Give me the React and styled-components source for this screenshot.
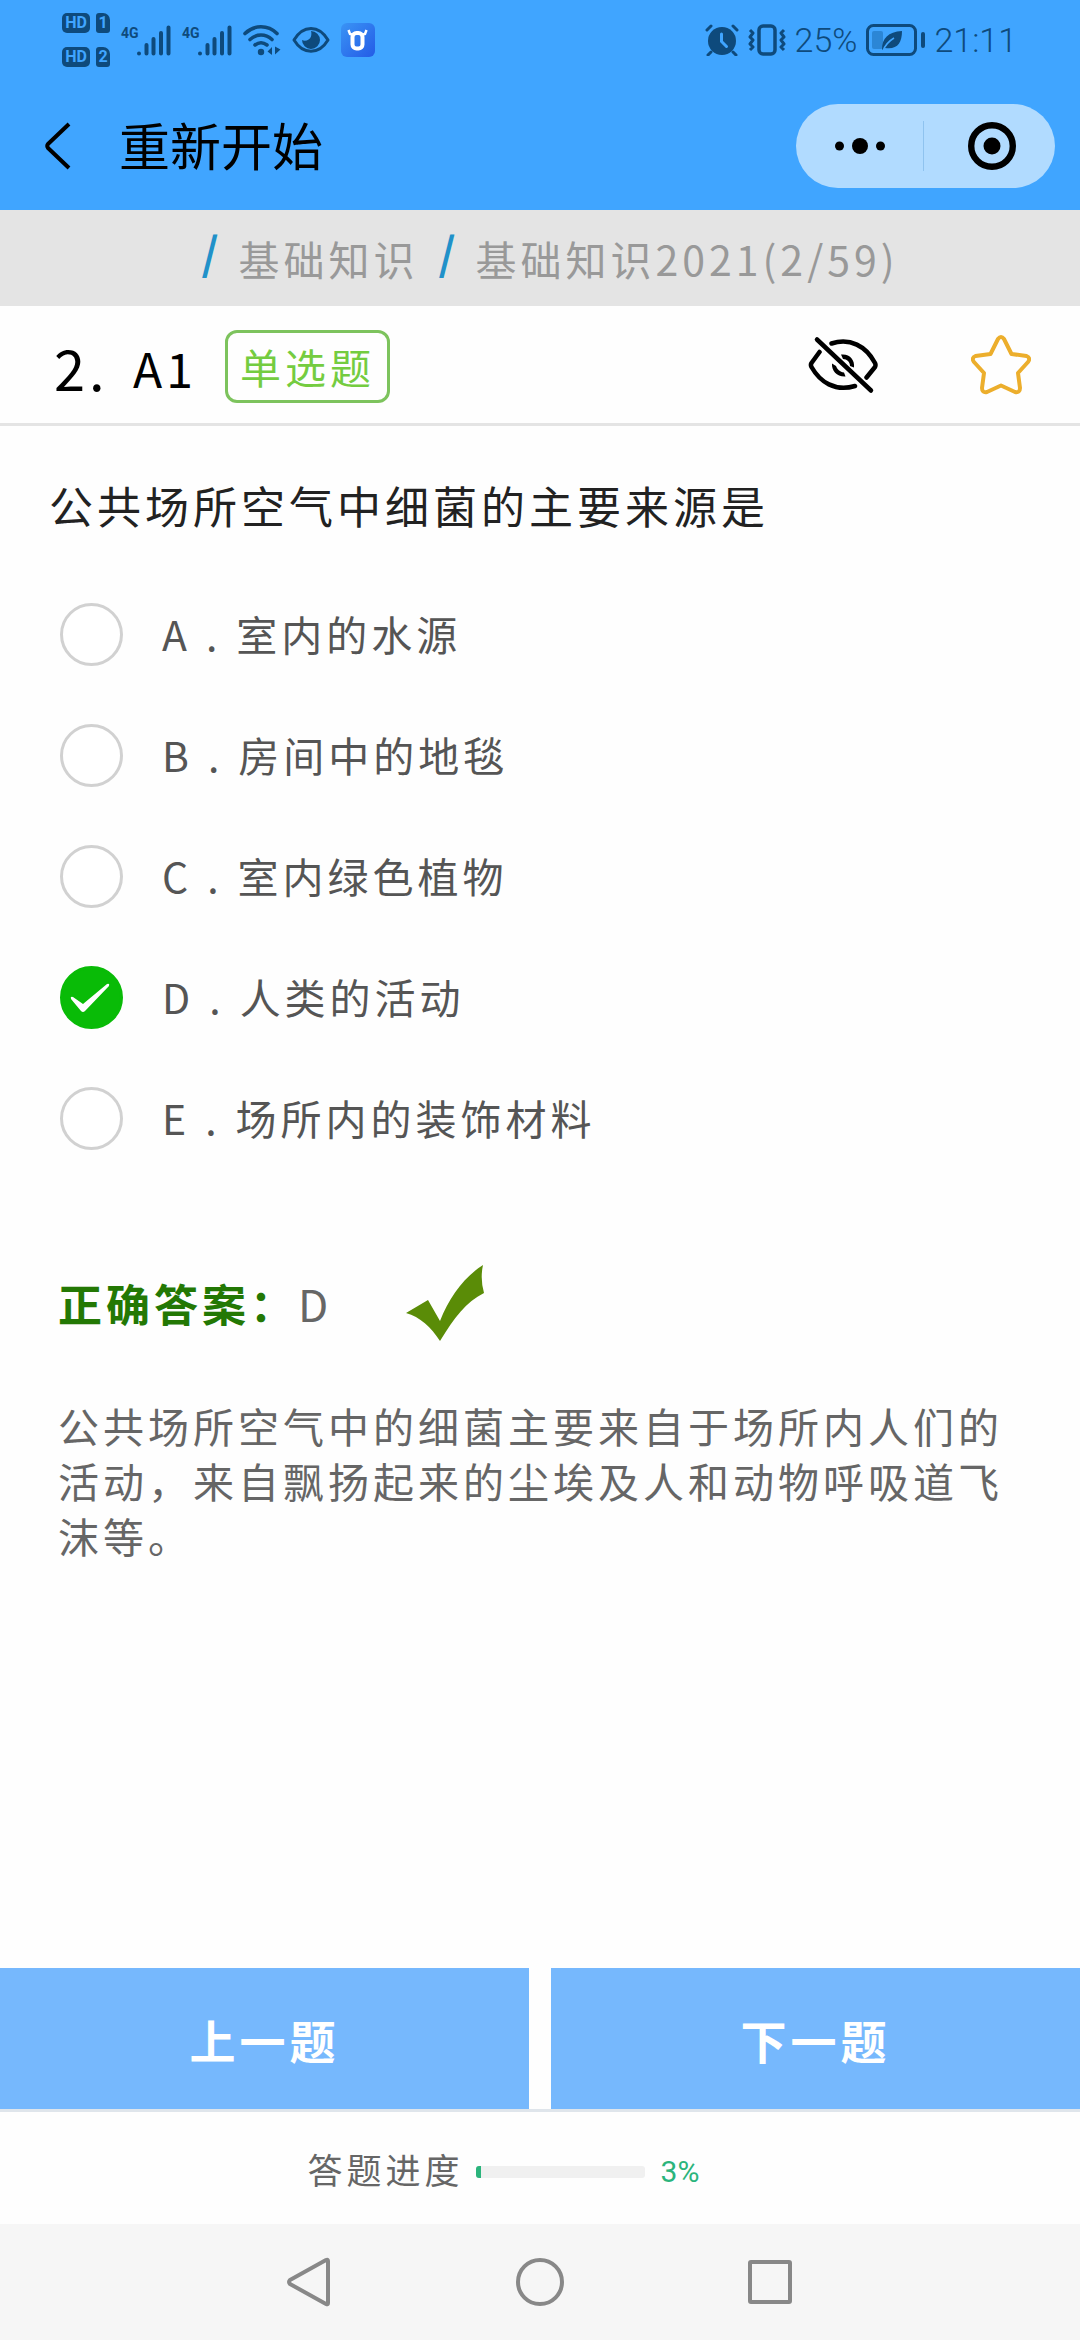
import React, { useState } from 'react';
import styled, { createGlobalStyle } from 'styled-components';

const GlobalStyle = createGlobalStyle`
  * {
    box-sizing: border-box;
  }

  body {
    margin: 0;
    background-color: #fefefe;
    font-family: 'Noto Sans CJK SC', sans-serif;
  }

  button {
    padding: 0;
    border: none;
    background: none;
    font-family: inherit;
    cursor: pointer;
  }

  svg {
    display: block;
    flex-shrink: 0;
  }
`;

const Page = styled.div`
  display: flex;
  flex-direction: column;
  min-height: 100vh;
  width: 100%;
`;

const StatusBar = styled.div`
  display: flex;
  align-items: center;
  justify-content: space-between;
  height: 80px;
  padding: 0 63px 0 62px;
  background-color: #40a5ff;
  color: #0e4a7c;
  font-family: Roboto, 'Noto Sans CJK SC', sans-serif;
`;

const StatusGroup = styled.div`
  display: flex;
  align-items: center;
  gap: ${({ $gap }) => $gap}px;
`;

const SimList = styled.div`
  display: flex;
  flex-direction: column;
  gap: 14px;
`;

const Sim = styled.div`
  display: flex;
  gap: 6px;
`;

const SimTag = styled.span`
  width: ${({ $narrow }) => ($narrow ? 14 : 28)}px;
  height: 20px;
  border-radius: ${({ $narrow }) => ($narrow ? '3px 7px 3px 3px' : '5px')};
  background-color: #0e4a7c;
  color: #40a5ff;
  font-size: 16px;
  font-weight: 700;
  line-height: 20px;
  text-align: center;
`;

const Signal = styled.div`
  display: flex;
  align-items: flex-start;
`;

const NetworkType = styled.span`
  width: 16px;
  font-size: 14px;
  font-weight: 700;
  line-height: 16px;
`;

const StatusText = styled.span`
  font-size: 34px;
  font-weight: 300;
  line-height: 40px;
`;

const Header = styled.header`
  display: flex;
  align-items: center;
  justify-content: space-between;
  height: 130px;
  padding: 2px 25px 0 44px;
  background-color: #40a5ff;
`;

const HeaderLeft = styled.div`
  display: flex;
  align-items: center;
  gap: 48px;
`;

const Title = styled.h1`
  margin: 0;
  padding-bottom: 4px;
  font-size: 51px;
  font-weight: 400;
  line-height: 60px;
  color: #000;
`;

const Capsule = styled.div`
  display: flex;
  align-items: center;
  width: 259px;
  height: 84px;
  border-radius: 42px;
  background-color: #b1dbff;
`;

const CapsuleButton = styled.button`
  display: flex;
  flex: 1;
  align-items: center;
  justify-content: center;
  height: 50px;

  & + & {
    padding-left: 4px;
    border-left: 1px solid #8fc3ef;
  }
`;

const Breadcrumb = styled.nav`
  display: flex;
  align-items: center;
  justify-content: center;
  gap: 20px;
  height: 96px;
  padding-left: 20px;
  background-color: #e4e4e4;
  font-size: 41px;
  line-height: 56px;
  letter-spacing: 4px;
`;

const Slash = styled.span`
  padding-bottom: 14px;
  color: #2191c9;
  font-size: 44px;
  font-weight: 700;
  line-height: 56px;
  letter-spacing: 0;
`;

const Crumb = styled.a`
  color: #999;
  text-decoration: none;
`;

const QuestionBar = styled.div`
  display: flex;
  align-items: center;
  justify-content: space-between;
  padding: 24px 49px 20px 54px;
  border-bottom: 3px solid #e4e4e4;
  letter-spacing: 4px;
  color: #000;
`;

const QuestionMeta = styled.div`
  display: flex;
  align-items: center;
`;

const QuestionNumber = styled.span`
  width: 79px;
  font-size: 56px;
  line-height: 64px;
`;

const QuestionKind = styled.span`
  width: 92px;
  font-size: 48px;
  line-height: 64px;
`;

const TypeBadge = styled.span`
  padding: 5px 12px 6px;
  border: 3px solid #7dc35d;
  border-radius: 12px;
  color: #74cc40;
  font-size: 41px;
  line-height: 56px;
`;

const Tools = styled.div`
  display: flex;
  align-items: center;
  gap: 93px;
  padding-bottom: 4px;
`;

const Main = styled.main`
  flex: 1;
  padding: 47px 60px 60px 58px;
  letter-spacing: 4px;
`;

const QuestionText = styled.h2`
  margin: 0 0 37px -9px;
  font-size: 44px;
  font-weight: 400;
  line-height: 64px;
  color: #222;
`;

const Option = styled.label`
  display: flex;
  align-items: center;
  gap: 39px;
  height: 121px;
  padding-left: 2px;
  font-size: 41px;
  line-height: 56px;
  color: #555;
  cursor: pointer;
`;

const RadioBox = styled.span`
  position: relative;
  width: 63px;
  height: 63px;

  svg {
    position: absolute;
    top: 0;
    left: 0;
    pointer-events: none;
  }
`;

const Radio = styled.input`
  appearance: none;
  display: block;
  width: 63px;
  height: 63px;
  margin: 0;
  border: 3px solid #d1d1d1;
  border-radius: 50%;
  background-color: #fff;

  &:checked {
    border-color: #09bb07;
    background-color: #09bb07;
  }
`;

const OptionText = styled.span`
  display: flex;
  gap: 15px;
  padding-bottom: 4px;
`;

const AnswerRow = styled.div`
  display: flex;
  align-items: center;
  height: 80px;
  margin-top: 84px;
  font-size: 44px;
  line-height: 64px;
`;

const AnswerLabel = styled.strong`
  font-weight: 700;
  color: #237804;
`;

const AnswerValue = styled.span`
  margin-right: 74px;
  color: #666;
`;

const Explanation = styled.p`
  margin: 55px 0 0;
  font-size: 41px;
  line-height: 55px;
  color: #666;
`;

const Pager = styled.div`
  display: grid;
  grid-template-columns: 1fr 1fr;
  gap: 22px;
  border-bottom: 3px solid #dfe5eb;
`;

const PagerButton = styled.button`
  height: 141px;
  background-color: #76b8fd;
  color: #fff;
  font-size: 46px;
  font-weight: 700;
  line-height: 64px;
  letter-spacing: 4px;
`;

const Progress = styled.div`
  display: flex;
  align-items: center;
  justify-content: center;
  height: 112px;
  padding: 8px 73px 0 0;
`;

const ProgressLabel = styled.span`
  margin-right: 12px;
  padding-bottom: 6px;
  font-size: 35px;
  line-height: 48px;
  letter-spacing: 4px;
  color: #666;
`;

const Track = styled.div`
  width: 169px;
  height: 12px;
  margin-right: 16px;
  border-radius: 3px;
  background-color: #f0f0f0;
  overflow: hidden;
`;

const Fill = styled.div`
  height: 100%;
  background-color: #2bb47c;
`;

const Percent = styled.span`
  font-family: Roboto, sans-serif;
  font-size: 30px;
  line-height: 36px;
  color: #2bb47c;
`;

const SystemNav = styled.nav`
  display: flex;
  align-items: center;
  justify-content: center;
  gap: 180px;
  height: 116px;
  background-color: #f6f6f6;
`;

const SignalIcon = () => (
  <svg width="34" height="31" viewBox="0 0 34 31" fill="none" stroke="currentColor" strokeWidth="4" strokeLinecap="round">
    <path d="M2 28.5v0M9.500 20v8.500M16.500 14v14.500M24 8v20.500M31.500 2.500v26" />
  </svg>
);

const WifiIcon = () => (
  <svg width="38" height="32" viewBox="0 0 38 32" fill="none" stroke="currentColor" strokeWidth="3.600" strokeLinecap="round">
    <path d="M2 9.500C11 .5 25 .5 34 9.500M7 15.500C13.500 9.500 22.500 9.500 29 15.500M12 21c4-3 8-3 12 0" />
    <circle cx="18" cy="28" r="3.200" fill="currentColor" stroke="none" />
    <path d="M29 23v8l-4.500-3.500zM32 22.500v8l5.500-5z" fill="currentColor" stroke="none" />
  </svg>
);

const EyeIcon = () => (
  <svg width="38" height="28" viewBox="0 0 38 28" fill="none">
    <path d="M2 14C11-1.500 27-1.500 36 14C27 29 11 29 2 14z" stroke="currentColor" strokeWidth="3" strokeLinejoin="round" />
    <path d="M19 5a9 9 0 1 1-9 9c3 2 8 0 9-3.500c.5-2 .5-4 0-5.500z" fill="currentColor" />
  </svg>
);

const AppBadgeIcon = () => (
  <svg width="34" height="34" viewBox="0 0 34 34">
    <defs>
      <linearGradient id="appBadge" x1="0" y1="0" x2="1" y2="1">
        <stop offset="0" stopColor="#3a94f5" />
        <stop offset="1" stopColor="#245be6" />
      </linearGradient>
    </defs>
    <rect width="34" height="34" rx="6" fill="url(#appBadge)" />
    <path d="M7.500 7l1.500 4 4 1M25.500 7l-1.500 4-4 1" stroke="#fff" strokeWidth="2.500" fill="none" />
    <rect x="11.500" y="10" width="10" height="15.500" rx="4" fill="none" stroke="#fff" strokeWidth="4" />
  </svg>
);

const AlarmIcon = () => (
  <svg width="34" height="32" viewBox="0 0 34 32" fill="none" stroke="currentColor" strokeWidth="3" strokeLinecap="round">
    <circle cx="17" cy="17" r="14" fill="currentColor" stroke="none" />
    <path d="M2 6l4-4M32 6l-4-4M6 28l-3 3M28 28l3 3" />
    <path d="M16.500 10v7.500l5 5" stroke="#40a5ff" />
  </svg>
);

const VibrateIcon = () => (
  <svg width="38" height="32" viewBox="0 0 38 32" fill="none" stroke="currentColor" strokeWidth="3.500" strokeLinejoin="round">
    <rect x="11" y="2" width="16" height="28" rx="4" />
    <path d="M2 6l3 3-3 4 3 3-3 4 3 3-3 3M36 6l-3 3 3 4-3 3 3 4-3 3 3 3" strokeWidth="3" />
  </svg>
);

const BatteryIcon = () => (
  <svg width="59" height="32" viewBox="0 0 59 32" fill="none">
    <rect x="1.500" y="1.500" width="48" height="29" rx="6" stroke="currentColor" strokeWidth="3" />
    <rect x="6" y="7" width="11" height="18" rx="2" fill="#2b86d6" />
    <path d="M16 26c0-12 6-18 20-19c0 12-5 19-17 17z" fill="currentColor" />
    <path d="M17 27c2-6 6-10 11-13" stroke="#40a5ff" strokeWidth="1.500" />
    <rect x="55" y="8" width="4" height="16" rx="2" fill="currentColor" />
  </svg>
);

const BackIcon = () => (
  <svg width="27" height="48" viewBox="0 0 27 48" fill="none" stroke="#000" strokeWidth="4" strokeLinejoin="round">
    <path d="M25 2L4 22q-1.500 2 0 4L25 46" />
  </svg>
);

const MoreIcon = () => (
  <svg width="50" height="16" viewBox="0 0 50 16">
    <circle cx="4.500" cy="8" r="4.500" />
    <circle cx="25" cy="8" r="8" />
    <circle cx="45.500" cy="8" r="4.500" />
  </svg>
);

const CloseIcon = () => (
  <svg width="48" height="48" viewBox="0 0 48 48">
    <circle cx="24" cy="24" r="20.800" fill="none" stroke="#000" strokeWidth="6.400" />
    <circle cx="24" cy="24" r="8.500" />
  </svg>
);

const EyeOffIcon = () => (
  <svg width="70" height="60" viewBox="0 0 70 60" fill="none" stroke="#000" strokeWidth="4.500" strokeLinecap="round" strokeLinejoin="round">
    <path d="M9 4.500L63 55.500" />
    <path d="M23.500 8.500C42 2.500 58 11 67 28q1 2 0 4L58.500 42.500" />
    <path d="M11.500 17L3.500 28q-1.200 2 0 4C12 47 27 57 47 51" />
    <path
      d="M33 19.500C42 18.500 47 25 46 32.500L42 31C42 27 39 24 35 24zM24 28.500C23.500 36 29 42 37.500 41.500L36 37.500C32 37 29 34 28 31z"
      fill="#000"
      stroke="none"
    />
  </svg>
);

const StarIcon = () => (
  <svg width="60" height="60" viewBox="0 0 60 60" fill="none" stroke="#ecae2c" strokeWidth="4" strokeLinejoin="round">
    <path d="M27 4q3-4 6 0l7.500 15 15 2q4.500 2 1.500 6L47 38l2 15q0 5-5 4L30 50.500 16 57q-5 1-5-4l2-15L3 27q-3-4 1.500-6l15-2z" />
  </svg>
);

const TickIcon = () => (
  <svg width="78" height="78" viewBox="0 0 78 78" fill="#5a8c07">
    <path d="M0 49L22 36L34 57C43 34 58 13 77 1Q74 15 78 29C60 38 48 54 34 77C25 63 14 53 0 49z" />
  </svg>
);

const RadioCheckIcon = () => (
  <svg width="63" height="63" viewBox="0 0 63 63" fill="#fff">
    <path d="M11 33q-1-3 2-2l10 7 24-20q3-1 2 2L25 45q-2 2-4 0z" />
  </svg>
);

const navIcon = { width: 50, height: 50, viewBox: '0 0 50 50', fill: 'none', stroke: '#888', strokeWidth: 4, strokeLinejoin: 'round' };

const options = [
  { key: 'A', text: '室内的水源' },
  { key: 'B', text: '房间中的地毯' },
  { key: 'C', text: '室内绿色植物' },
  { key: 'D', text: '人类的活动' },
  { key: 'E', text: '场所内的装饰材料' },
];

const App = () => {
  const [selected, setSelected] = useState('D');
  const current = 2;
  const total = 59;
  const percent = Math.round((current / total) * 100);

  return (
    <Page>
      <GlobalStyle />
      <StatusBar>
        <StatusGroup $gap={11}>
          <SimList>
            <Sim><SimTag>HD</SimTag><SimTag $narrow>1</SimTag></Sim>
            <Sim><SimTag>HD</SimTag><SimTag $narrow>2</SimTag></Sim>
          </SimList>
          <Signal><NetworkType>4G</NetworkType><SignalIcon /></Signal>
          <Signal><NetworkType>4G</NetworkType><SignalIcon /></Signal>
          <WifiIcon />
          <EyeIcon />
          <AppBadgeIcon />
        </StatusGroup>
        <StatusGroup $gap={9}>
          <AlarmIcon />
          <VibrateIcon />
          <StatusText>25%</StatusText>
          <BatteryIcon />
          <StatusText>21:11</StatusText>
        </StatusGroup>
      </StatusBar>

      <Header>
        <HeaderLeft>
          <button type="button" aria-label="返回"><BackIcon /></button>
          <Title>重新开始</Title>
        </HeaderLeft>
        <Capsule>
          <CapsuleButton type="button" aria-label="更多"><MoreIcon /></CapsuleButton>
          <CapsuleButton type="button" aria-label="关闭"><CloseIcon /></CapsuleButton>
        </Capsule>
      </Header>

      <Breadcrumb>
        <Slash>/</Slash>
        <Crumb href="#basic">基础知识</Crumb>
        <Slash>/</Slash>
        <Crumb href="#basic-2021">基础知识2021({current}/{total})</Crumb>
      </Breadcrumb>

      <QuestionBar>
        <QuestionMeta>
          <QuestionNumber>{current}.</QuestionNumber>
          <QuestionKind>A1</QuestionKind>
          <TypeBadge>单选题</TypeBadge>
        </QuestionMeta>
        <Tools>
          <button type="button" aria-label="隐藏答案"><EyeOffIcon /></button>
          <button type="button" aria-label="收藏"><StarIcon /></button>
        </Tools>
      </QuestionBar>

      <Main>
        <QuestionText>公共场所空气中细菌的主要来源是</QuestionText>
        {options.map((option) => (
          <Option key={option.key}>
            <RadioBox>
              <Radio
                type="radio"
                name="answer"
                value={option.key}
                checked={selected === option.key}
                onChange={() => setSelected(option.key)}
              />
              {selected === option.key && <RadioCheckIcon />}
            </RadioBox>
            <OptionText>
              <span>{option.key}</span>
              <span>.</span>
              <span>{option.text}</span>
            </OptionText>
          </Option>
        ))}
        <AnswerRow>
          <AnswerLabel>正确答案：</AnswerLabel>
          <AnswerValue>D</AnswerValue>
          <TickIcon />
        </AnswerRow>
        <Explanation>
          公共场所空气中的细菌主要来自于场所内人们的活动，来自飘扬起来的尘埃及人和动物呼吸道飞沫等。
        </Explanation>
      </Main>

      <Pager>
        <PagerButton type="button">上一题</PagerButton>
        <PagerButton type="button">下一题</PagerButton>
      </Pager>

      <Progress>
        <ProgressLabel id="progress-label">答题进度</ProgressLabel>
        <Track role="progressbar" aria-labelledby="progress-label" aria-valuenow={percent}>
          <Fill style={{ width: `${percent}%` }} />
        </Track>
        <Percent>{percent}%</Percent>
      </Progress>

      <SystemNav>
        <button type="button" aria-label="后退">
          <svg {...navIcon}><path d="M43 4v42q0 2-2 1L5 27q-2-2 0-4L41 3q2-1 2 1z" /></svg>
        </button>
        <button type="button" aria-label="主屏幕">
          <svg {...navIcon}><circle cx="25" cy="25" r="22" /></svg>
        </button>
        <button type="button" aria-label="最近任务">
          <svg {...navIcon}><rect x="5" y="5" width="40" height="40" rx="1" /></svg>
        </button>
      </SystemNav>
    </Page>
  );
};

export default App;
